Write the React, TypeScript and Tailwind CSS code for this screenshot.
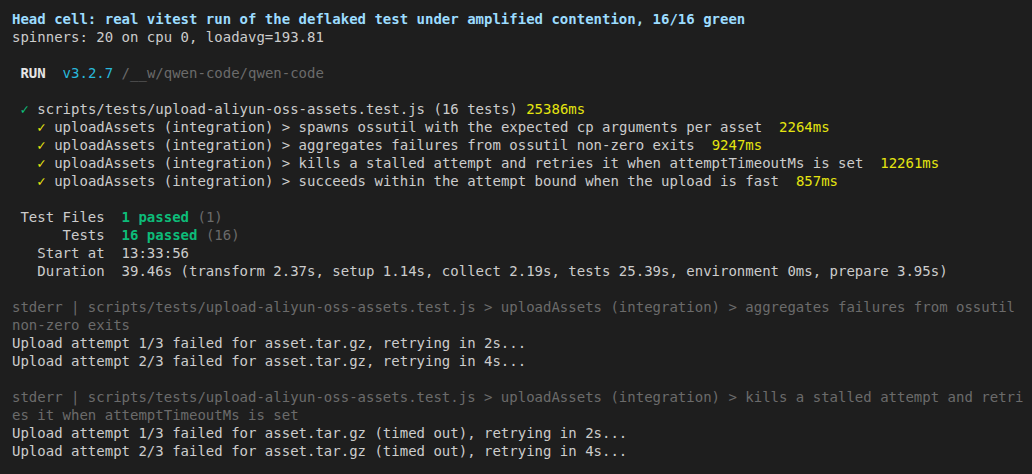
import React from 'react';

const mono = "font-['DejaVu_Sans_Mono','Liberation_Mono',monospace]";

const tests = [
  { name: 'spawns ossutil with the expected cp arguments per asset', ms: '2264ms' },
  { name: 'aggregates failures from ossutil non-zero exits', ms: '9247ms' },
  { name: 'kills a stalled attempt and retries it when attemptTimeoutMs is set', ms: '12261ms' },
  { name: 'succeeds within the attempt bound when the upload is fast', ms: '857ms' },
];

function Line({ children }: { children?: React.ReactNode }) {
  return <div className="h-[18px]">{children ?? ' '}</div>;
}

export default function App() {
  return (
    <div className={`w-[1032px] h-[474px] overflow-hidden bg-[#1e1e1e] text-[#cccccc] ${mono} text-[14px] leading-[18px] whitespace-pre px-3 pt-[10px]`}>
      <Line>
        <span className="font-bold text-[#9cdcfe]">
          Head cell: real vitest run of the deflaked test under amplified contention, 16/16 green
        </span>
      </Line>
      <Line>spinners: 20 on cpu 0, loadavg=193.81</Line>
      <Line />
      <Line>
        {' '}<span className="font-bold text-[#e5e5e5]">RUN</span>{'  '}
        <span className="text-[#29b8db]">v3.2.7</span>{' '}
        <span className="text-[#6b6b6b]">/__w/qwen-code/qwen-code</span>
      </Line>
      <Line />
      <Line>
        {' '}<span className="text-[#0dbc79]">✓</span> scripts/tests/upload-aliyun-oss-assets.test.js (16 tests){' '}
        <span className="text-[#e5e510]">25386ms</span>
      </Line>
      {tests.map((t) => (
        <Line key={t.name}>
          {'   '}<span className="text-[#e5e510]">✓</span> uploadAssets (integration) &gt; {t.name}{'  '}
          <span className="text-[#e5e510]">{t.ms}</span>
        </Line>
      ))}
      <Line />
      <Line>
        {' Test Files  '}<span className="font-bold text-[#0dbc79]">1 passed</span>{' '}
        <span className="text-[#6b6b6b]">(1)</span>
      </Line>
      <Line>
        {'      Tests  '}<span className="font-bold text-[#0dbc79]">16 passed</span>{' '}
        <span className="text-[#6b6b6b]">(16)</span>
      </Line>
      <Line>{'   Start at  13:33:56'}</Line>
      <Line>
        {'   Duration  39.46s (transform 2.37s, setup 1.14s, collect 2.19s, tests 25.39s, environment 0ms, prepare 3.95s)'}
      </Line>
      <Line />
      <Line>
        <span className="text-[#6b6b6b]">
          stderr | scripts/tests/upload-aliyun-oss-assets.test.js &gt; uploadAssets (integration) &gt; aggregates failures from ossutil
        </span>
      </Line>
      <Line>
        <span className="text-[#6b6b6b]">non-zero exits</span>
      </Line>
      <Line>Upload attempt 1/3 failed for asset.tar.gz, retrying in 2s...</Line>
      <Line>Upload attempt 2/3 failed for asset.tar.gz, retrying in 4s...</Line>
      <Line />
      <Line>
        <span className="text-[#6b6b6b]">
          stderr | scripts/tests/upload-aliyun-oss-assets.test.js &gt; uploadAssets (integration) &gt; kills a stalled attempt and retri
        </span>
      </Line>
      <Line>
        <span className="text-[#6b6b6b]">es it when attemptTimeoutMs is set</span>
      </Line>
      <Line>Upload attempt 1/3 failed for asset.tar.gz (timed out), retrying in 2s...</Line>
      <Line>Upload attempt 2/3 failed for asset.tar.gz (timed out), retrying in 4s...</Line>
    </div>
  );
}
